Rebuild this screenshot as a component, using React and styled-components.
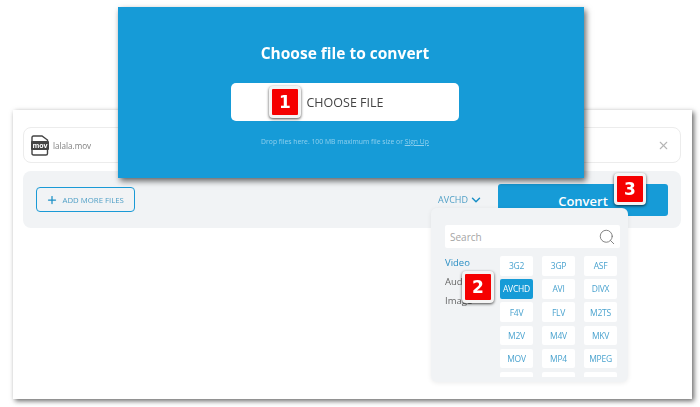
import React from 'react';
import styled, { createGlobalStyle } from 'styled-components';
import { Search, Plus, X, ChevronDown } from 'lucide-react';

const GlobalStyle = createGlobalStyle`
  html, body {
    margin: 0;
    padding: 0;
    background: #fff;
    overflow: hidden;
    font-family: "Open Sans", "Liberation Sans", sans-serif;
  }
`;

const Page = styled.div`
  position: relative;
  width: 700px;
  height: 407px;
  padding: 110px 0 0 13px;
  box-sizing: border-box;
  filter: blur(0.35px);
`;

const Panel = styled.div`
  position: relative;
  width: 679px;
  height: 289px;
  padding: 17px 11px 0 10px;
  box-sizing: border-box;
  background: #fff;
  box-shadow: 2px 2px 5px rgba(0, 0, 0, 0.6);
`;

const FileRow = styled.div`
  display: flex;
  align-items: center;
  height: 36px;
  padding: 1px 10px 0 7px;
  box-sizing: border-box;
  border: 1px solid #ececec;
  border-radius: 8px;
`;

const FileName = styled.span`
  margin-left: 4px;
  flex: 1;
  font-size: 8.1px;
  color: #808080;
`;

const Toolbar = styled.div`
  position: relative;
  display: flex;
  align-items: center;
  height: 57px;
  margin-top: 8px;
  padding: 0 13px;
  border-radius: 8px;
  background: #f1f3f5;
`;

const AddButton = styled.button`
  display: flex;
  align-items: center;
  gap: 5px;
  width: 99px;
  height: 25px;
  padding: 0 0 0 8.5px;
  box-sizing: border-box;
  border: 1.5px solid #1a9ad6;
  border-radius: 4px;
  background: transparent;
  color: #4f9fc6;
  font-family: inherit;
  font-size: 7.8px;
  white-space: nowrap;
`;

const FormatPicker = styled.div`
  display: flex;
  align-items: center;
  gap: 1px;
  margin-left: auto;
  margin-right: 15px;
  color: #4f9fc6;
  font-size: 9px;
`;

const ConvertButton = styled.button`
  width: 170px;
  height: 32px;
  margin-top: 1px;
  padding: 2px 0 0;
  border: 0;
  border-radius: 3px;
  background: #169bd7;
  color: #fff;
  font-family: inherit;
  font-size: 13px;
  font-weight: 600;
`;

const Popover = styled.div`
  position: absolute;
  left: 408px;
  top: 37px;
  width: 197px;
  height: 174px;
  padding: 17px 8px 0 14px;
  box-sizing: border-box;
  border-radius: 6px;
  background: #f1f3f5;
  box-shadow: 0 1px 5px rgba(0, 0, 0, 0.08);
`;

const SearchBox = styled.div`
  display: flex;
  align-items: center;
  justify-content: space-between;
  height: 23px;
  padding: 1px 4px 0 5px;
  box-sizing: border-box;
  border-radius: 2px;
  background: #fff;
  color: #a5a5a5;
  font-size: 10px;
`;

const PopoverBody = styled.div`
  display: flex;
  margin-top: 8px;
`;

const Categories = styled.div`
  display: flex;
  flex-direction: column;
  gap: 8px;
  width: 55px;
  padding-top: 1px;
  font-size: 9.5px;
  line-height: 11px;
`;

const Category = styled.div`
  color: ${({ $active }) => ($active ? '#2b8fc4' : '#666')};
`;

const FormatGrid = styled.div`
  display: grid;
  grid-template-columns: repeat(3, 33px);
  grid-auto-rows: 19.5px;
  column-gap: 9px;
  row-gap: 3.7px;
  height: 121px;
  overflow: hidden;
`;

const FormatItem = styled.div`
  display: flex;
  align-items: center;
  justify-content: center;
  border-radius: 2px;
  background: ${({ $active }) => ($active ? '#169bd7' : '#fff')};
  color: ${({ $active }) => ($active ? '#fff' : '#4ba3cf')};
  font-size: 8.5px;
  letter-spacing: -0.25px;
`;

const Modal = styled.div`
  position: absolute;
  left: 118px;
  top: 7px;
  display: flex;
  flex-direction: column;
  align-items: center;
  width: 466px;
  height: 171px;
  padding: 35px 12px 0 0;
  box-sizing: border-box;
  background: #169bd7;
  box-shadow: 2px 3px 6px rgba(0, 0, 0, 0.6);
`;

const ModalTitle = styled.div`
  color: #fff;
  font-size: 15.5px;
  font-weight: 700;
  line-height: 22px;
`;

const ChooseButton = styled.div`
  display: flex;
  align-items: center;
  justify-content: center;
  width: 228px;
  height: 38px;
  margin-top: 19px;
  border-radius: 5px;
  background: #fff;
  color: #444;
  font-size: 12.5px;
`;

const DropNote = styled.div`
  margin-top: 15px;
  color: #8fd0ee;
  font-size: 6.8px;
  line-height: 11px;
`;

const SignUp = styled.span`
  text-decoration: underline;
`;

const Badge = styled.div`
  position: absolute;
  left: ${({ $x }) => $x}px;
  top: ${({ $y }) => $y}px;
  display: flex;
  align-items: center;
  justify-content: center;
  width: 26px;
  height: 26px;
  border: 3px solid #f4f4f4;
  border-radius: 4px;
  background: #f50000;
  box-shadow: 0 1px 3px rgba(0, 0, 0, 0.7);
  color: #fff;
  font-family: "DejaVu Sans", sans-serif;
  font-size: 17px;
  font-weight: 700;
`;

const MovIcon = () => (
  <svg width="18" height="21" viewBox="0 0 18 21">
    <path d="M1 2.5Q1 1 2.5 1H11L16.5 5V18.5Q16.5 20 15 20H2.5Q1 20 1 18.5Z" fill="none" stroke="#444" strokeWidth="1.4" />
    <rect x="0" y="6" width="18" height="9" rx="1" fill="#444" />
    <text x="9" y="13" textAnchor="middle" fontSize="7" fontWeight="700" fill="#fff" fontFamily="Open Sans, sans-serif">mov</text>
  </svg>
);

const formats = [
  '3G2', '3GP', 'ASF', 'AVCHD', 'AVI', 'DIVX', 'F4V', 'FLV', 'M2TS',
  'M2V', 'M4V', 'MKV', 'MOV', 'MP4', 'MPEG', '', '', '',
];

const App = () => (
  <Page>
    <GlobalStyle />
    <Panel>
      <FileRow>
        <MovIcon />
        <FileName>lalala.mov</FileName>
        <X size={13} color="#b5b5b5" />
      </FileRow>
      <Toolbar>
        <AddButton>
          <Plus size={12} color="#1a8fc6" strokeWidth={2.5} />
          ADD MORE FILES
        </AddButton>
        <FormatPicker>
          AVCHD
          <ChevronDown size={14} color="#1a8fc6" strokeWidth={2.5} />
        </FormatPicker>
        <ConvertButton>Convert</ConvertButton>
        <Popover>
          <SearchBox>
            Search
            <Search size={18} color="#777" strokeWidth={1.2} />
          </SearchBox>
          <PopoverBody>
            <Categories>
              <Category $active>Video</Category>
              <Category>Audio</Category>
              <Category>Image</Category>
            </Categories>
            <FormatGrid>
              {formats.map((format, i) => (
                <FormatItem key={i} $active={format === 'AVCHD'}>{format}</FormatItem>
              ))}
            </FormatGrid>
          </PopoverBody>
        </Popover>
      </Toolbar>
    </Panel>
    <Modal>
      <ModalTitle>Choose file to convert</ModalTitle>
      <ChooseButton>CHOOSE FILE</ChooseButton>
      <DropNote>Drop files here. 100 MB maximum file size or <SignUp>Sign Up</SignUp></DropNote>
    </Modal>
    <Badge $x={269} $y={86}>1</Badge>
    <Badge $x={462} $y={271}>2</Badge>
    <Badge $x={614} $y={173}>3</Badge>
  </Page>
);

export default App;
